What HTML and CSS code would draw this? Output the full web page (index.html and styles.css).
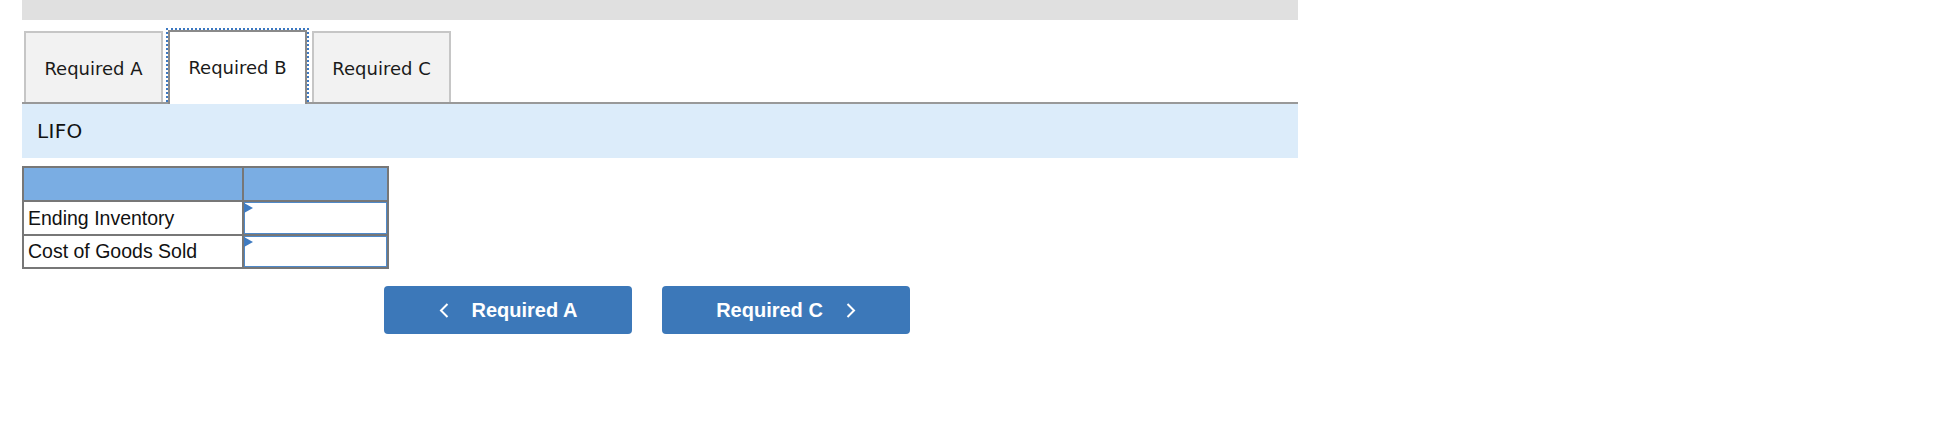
FILE: index.html
```html
<!DOCTYPE html>
<html lang="en">
<head>
    <meta charset="UTF-8">
    <title>Required B</title>
    <link rel="stylesheet" href="styles.css">
</head>
<body>
    <div class="panel">
        <div class="top-bar"></div>

        <div class="tabs">
            <div class="tab">Required A</div>
            <div class="tab active">Required B</div>
            <div class="tab">Required C</div>
        </div>

        <div class="section-title">LIFO</div>

        <div class="answer-grid">
            <div class="head-cell"></div>
            <div class="head-cell"></div>

            <div class="label-cell">Ending Inventory</div>
            <div class="input-cell"><input type="text"><span class="marker"></span></div>

            <div class="label-cell">Cost of Goods Sold</div>
            <div class="input-cell"><input type="text"><span class="marker"></span></div>
        </div>

        <div class="nav-buttons">
            <button class="nav-btn">
                <svg width="10" height="15" viewBox="0 0 10 15"><path d="M8.5 1 L2 7.5 L8.5 14" fill="none" stroke="#fff" stroke-width="2"/></svg>
                <span>Required A</span>
            </button>
            <button class="nav-btn">
                <span>Required C</span>
                <svg width="10" height="15" viewBox="0 0 10 15"><path d="M1.5 1 L8 7.5 L1.5 14" fill="none" stroke="#fff" stroke-width="2"/></svg>
            </button>
        </div>
    </div>
</body>
</html>
```

FILE: styles.css
```css
body {
    margin: 0;
    background-color: #fff;
    font-family: "DejaVu Sans", Verdana, sans-serif;
    color: #1a1a1a;
}

.panel {
    margin-left: 22px;
    width: 1276px;
}

.top-bar {
    height: 20px;
    background-color: #e0e0e0;
}

.tabs {
    display: flex;
    align-items: flex-end;
    gap: 5px;
    margin-top: 10px;
    padding-left: 2px;
    border-bottom: 2px solid #999;
}

.tab {
    box-sizing: border-box;
    width: 139px;
    height: 71px;
    padding-top: 1px;
    display: flex;
    align-items: center;
    justify-content: center;
    background-color: #f2f2f2;
    border: 2px solid #c6c6c6;
    border-bottom: none;
    font-size: 18px;
}

.tab.active {
    position: relative;
    height: 74px;
    margin-bottom: -2px;
    padding-top: 0;
    padding-bottom: 2px;
    background-color: #fff;
    border-color: #8a8a8a;
}

.tab.active::after {
    content: "";
    position: absolute;
    top: -4px;
    left: -4px;
    right: -4px;
    bottom: 2px;
    border: 2px dotted #3d79c2;
    border-bottom: none;
}

.section-title {
    height: 54px;
    line-height: 54px;
    padding-left: 15px;
    background-color: #dcecfa;
    font-size: 20px;
    letter-spacing: 0.3px;
    color: #111;
}

.answer-grid {
    display: grid;
    grid-template-columns: 218px 143px;
    grid-template-rows: 32px 32px 31px;
    gap: 2px;
    width: max-content;
    margin-top: 8px;
    border: 2px solid #777;
    background-color: #777;
}

.head-cell {
    background-color: #7aade3;
}

.label-cell {
    display: flex;
    align-items: center;
    padding-left: 4px;
    background-color: #fff;
    font-family: "Liberation Sans", Arial, sans-serif;
    font-size: 19.5px;
    color: #111;
}

.input-cell {
    position: relative;
    background-color: #fff;
}

.input-cell input {
    box-sizing: border-box;
    width: 100%;
    height: 100%;
    margin: 0;
    border: 1px solid #4f89c9;
    outline: none;
    background: #fff;
}

.marker {
    position: absolute;
    top: 1px;
    left: 0;
    width: 0;
    height: 0;
    border-left: 9px solid #3f7bc1;
    border-top: 5px solid transparent;
    border-bottom: 5px solid transparent;
}

.nav-buttons {
    display: flex;
    gap: 30px;
    margin-top: 17px;
    margin-left: 362px;
}

.nav-btn {
    display: flex;
    align-items: center;
    justify-content: center;
    gap: 23px;
    width: 248px;
    height: 48px;
    padding: 0;
    border: none;
    border-radius: 4px;
    background-color: #3c78b9;
    color: #fff;
    font-family: "Liberation Sans", Arial, sans-serif;
    font-weight: bold;
    font-size: 20px;
    cursor: pointer;
}
```
